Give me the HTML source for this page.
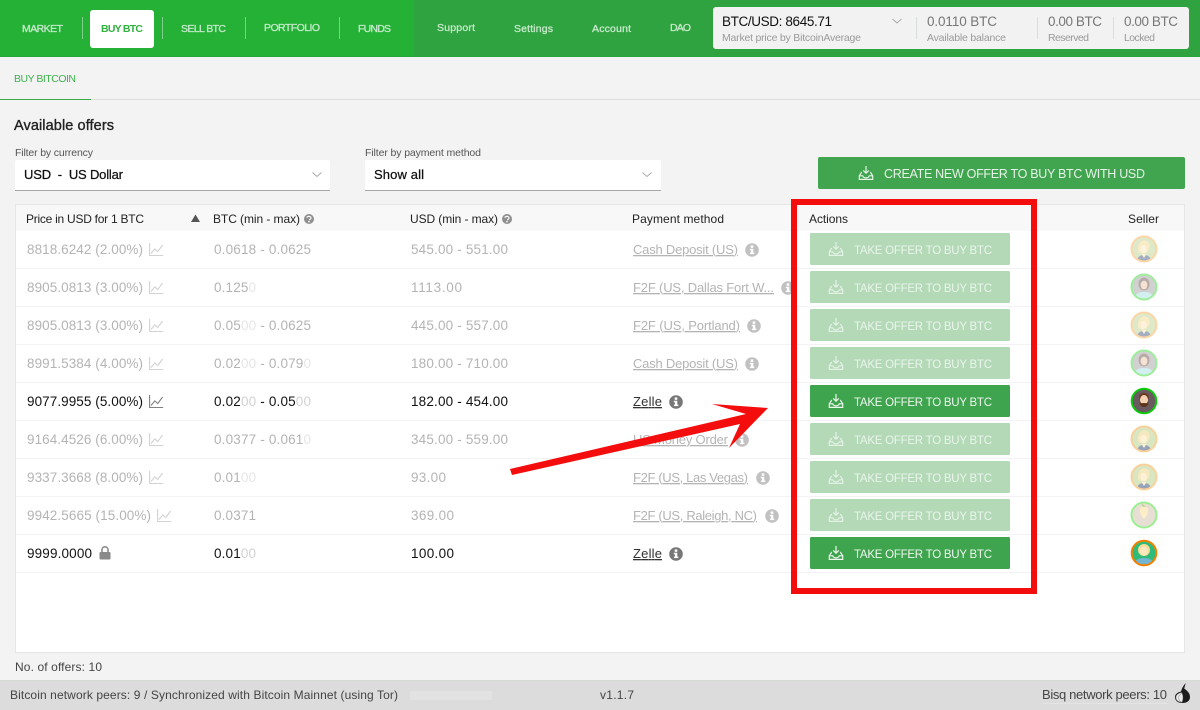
<!DOCTYPE html>
<html lang="en"><head><meta charset="utf-8"><title>Bisq - Buy BTC</title>
<style>
html,body{margin:0;padding:0;background:#f3f3f3;width:1200px;height:710px;overflow:hidden}
svg{display:block;font-family:"Liberation Sans",Arial,sans-serif}
.n{font-size:10.5px;fill:#c6e9cb;stroke:#c6e9cb;stroke-width:.3px}
.m{font-size:10.5px;fill:#9a9a9a}
.v{font-size:13.5px;fill:#777}
.h{font-size:12px;fill:#222}
.r{font-size:13.5px;fill:#b4b4b4}
.r tspan{fill:#e6e6e6}
.k{font-size:13.5px;fill:#111}
.k tspan{fill:#d2d2d2}
.p{font-size:13px;fill:#b4b4b4;text-decoration:underline}
.pk{font-size:13px;fill:#333;text-decoration:underline}
.b{font-size:11.5px;fill:#eaf5ec}
.bk{font-size:11.5px;fill:#eef8ef}
.f{font-size:12px;fill:#444}
</style></head><body>
<svg width="1200" height="710" viewBox="0 0 1200 710" xmlns="http://www.w3.org/2000/svg">
<defs>
<clipPath id="c"><circle r="12"/></clipPath>
<g id="dl" fill="none" stroke="currentColor" stroke-width="1.2"><path d="M7.500 0v7M4.700 4.400l2.800 2.800 2.800-2.800"/><path d="M3.200 6L.8 9.800v3.600h13.400V9.800L11.800 6"/><path d="M.8 9.800h3.400c.5 1.400 1.500 2 3.300 2s2.800-.6 3.300-2h3.400"/></g>
<g id="chart" fill="none" stroke="#808080" stroke-width="1.100"><path d="M.6 0v12.500h13.600"/><path d="M2 10.500l3.800-4.600 3 2.600L13.600 2"/></g>
<g id="info"><circle r="6.800" fill="#777"/><rect x="-1.300" y="-4.600" width="2.600" height="2.400" fill="#fff"/><path d="M-2.200-1.200h3.500v3.800h1v1.500h-4.400V2.600h1V.3h-1.100z" fill="#fff"/></g>
<g id="help"><circle r="5" fill="#8f8f8f"/><path d="M-2-1.200C-2-3 2-3.200 2-1c0 1.400-1.600 1.200-1.600 2.400" fill="none" stroke="#f8f8f8" stroke-width="1.200"/><rect x="-.8" y="2" width="1.500" height="1.400" fill="#f8f8f8"/></g>
<g id="avA"><g clip-path="url(#c)"><circle r="12" fill="#d3e2b8"/><path d="M-6 2C-7-8 0-10 3-8 7-6 6 0 3 3 1 5-5 5-6 2z" fill="#f6e6b4"/><ellipse cx="-.5" cy="0" rx="3.200" ry="4" fill="#fdf0d2"/><path d="M-7 13C-7 7-3 6 0 6s7 1 7 7z" fill="#8595ab"/><path d="M-2.500 5h5L0 9z" fill="#fbeed0"/></g><circle r="12.500" fill="none" stroke="#fbc98a" stroke-width="2"/></g>
<g id="avB"><g clip-path="url(#c)"><circle r="12" fill="#c2c2c2"/><ellipse cy="-3" rx="5.500" ry="6.500" fill="#a08e8a"/><ellipse cy="-2" rx="3.400" ry="4.400" fill="#f2d9c4"/><path d="M-10 13C-10 6-4 5 0 5s10 1 10 8z" fill="#c4eaee"/></g><circle r="12.500" fill="none" stroke="#7ee87a" stroke-width="2"/></g>
<g id="avC"><g clip-path="url(#c)"><circle r="12" fill="#e8dfd4"/><path d="M-3-12l5 4-2 2z" fill="#b8cf88"/><path d="M-4-6C-4-9 4-9 4-6 5-3 2 2 0 4-2 2-5-3-4-6z" fill="#fdeec8"/></g><circle r="12.500" fill="none" stroke="#9cef94" stroke-width="2"/></g>
<g id="avD"><g clip-path="url(#c)"><circle r="12" fill="#6a5a60"/><path d="M-5-3c0-7 10-7 10 0l-1 1c-3-2-5-2-8 0z" fill="#6b3d22"/><ellipse cy="-1" rx="4" ry="5" fill="#f3d3b4"/><path d="M-4 0c1 3 2 2 4 2s3 1 4-2c1 4-1 6-4 6s-5-2-4-6z" fill="#5c3418"/></g><circle r="12.300" fill="none" stroke="#0ccb0c" stroke-width="2"/></g>
<g id="avE"><g clip-path="url(#c)"><circle r="12" fill="#2fbb7a"/><circle cy="-3" r="6" fill="#f9dc98"/><ellipse cy="-2" rx="3.800" ry="4.600" fill="#fde8c0"/><path d="M-10 13C-10 6-4 5 0 5s10 1 10 8z" fill="#72b6d2"/></g><circle r="12.300" fill="none" stroke="#f58000" stroke-width="2"/></g>
</defs>

<rect width="1200" height="710" fill="#f3f3f3"/>
<rect width="414" height="56" fill="#25b136"/>
<rect x="414" width="786" height="56" fill="#2ea33f"/>
<rect y="56" width="1200" height="1" fill="#25a838"/>

<text class="n" x="22" y="32" textLength="41">MARKET</text>
<rect x="90" y="10" width="64" height="38" rx="3" fill="#fff"/>
<text x="101" y="32" font-size="10.500" font-weight="700" fill="#30b240" textLength="42">BUY BTC</text>
<text class="n" x="181" y="32" textLength="45">SELL BTC</text>
<text class="n" x="264" y="31" textLength="56">PORTFOLIO</text>
<text class="n" x="358" y="32" textLength="33">FUNDS</text>
<g fill="#7fd08a"><rect x="82" y="17" width="1" height="22"/><rect x="162" y="17" width="1" height="22"/><rect x="245" y="17" width="1" height="22"/><rect x="339" y="17" width="1" height="22"/></g>
<text class="n" x="437" y="31" textLength="38">Support</text>
<text class="n" x="514" y="32" textLength="39">Settings</text>
<text class="n" x="592" y="32" textLength="39">Account</text>
<text class="n" x="670" y="31" textLength="21">DAO</text>

<rect x="713" y="7" width="476" height="42" rx="3" fill="#f2f2f2"/>
<text x="722" y="26" font-size="13.500" fill="#111" textLength="110">BTC/USD: 8645.71</text>
<text class="m" x="722" y="41" textLength="139">Market price by BitcoinAverage</text>
<path d="M892.500 19l4.500 4 4.500-4" fill="none" stroke="#aaa" stroke-width="1"/>
<g fill="#d8dfd8"><rect x="916" y="17" width="1" height="22"/><rect x="1037" y="17" width="1" height="22"/><rect x="1113" y="17" width="1" height="22"/></g>
<text class="v" x="927" y="26" textLength="70">0.0110 BTC</text>
<text class="m" x="927" y="41" textLength="79">Available balance</text>
<text class="v" x="1048" y="26" textLength="54">0.00 BTC</text>
<text class="m" x="1048" y="41" textLength="41">Reserved</text>
<text class="v" x="1124" y="26" textLength="54">0.00 BTC</text>
<text class="m" x="1124" y="41" textLength="31">Locked</text>

<text x="14" y="82" font-size="10.500" fill="#3db24c" textLength="62">BUY BITCOIN</text>
<rect y="99" width="1200" height="1" fill="#dedede"/>
<rect y="99" width="91" height="1" fill="#3aab49"/>

<text x="14" y="130" font-size="14.500" fill="#222" stroke="#222" stroke-width=".35" textLength="100">Available offers</text>
<text x="15" y="156" font-size="10.500" fill="#555" textLength="78">Filter by currency</text>
<text x="365" y="156" font-size="10.500" fill="#555" textLength="116">Filter by payment method</text>

<rect x="15" y="160" width="315" height="30" rx="2" fill="#fff"/><rect x="15" y="190" width="315" height="1" fill="#a8a8a8"/>
<text x="24" y="179" font-size="13" fill="#111" stroke="#111" stroke-width=".25" textLength="99" xml:space="preserve">USD  -  US Dollar</text>
<path d="M312.500 172.500l4.500 4 4.500-4" fill="none" stroke="#aaa"/>
<rect x="365" y="160" width="296" height="30" rx="2" fill="#fff"/><rect x="365" y="190" width="296" height="1" fill="#a8a8a8"/>
<text x="374" y="179" font-size="13" fill="#111" stroke="#111" stroke-width=".25" textLength="50">Show all</text>
<path d="M642.500 172.500l4.500 4 4.500-4" fill="none" stroke="#aaa"/>

<rect x="818" y="157" width="367" height="32" rx="2" fill="#41a44f"/>
<use href="#dl" x="858.500" y="166" color="#e6f4e8"/>
<text x="884" y="178" font-size="12.500" fill="#e6f4e8" textLength="261">CREATE NEW OFFER TO BUY BTC WITH USD</text>

<rect x="15.500" y="204.500" width="1169" height="448" fill="#fff" stroke="#e6e6e6"/>
<rect x="16" y="205" width="1168" height="26" fill="#f8f8f8"/>
<text class="h" x="26" y="223" textLength="118">Price in USD for 1 BTC</text>
<path d="M191 222l4.500-7.500 4.500 7.500z" fill="#555"/>
<text class="h" x="213" y="223" textLength="87">BTC (min - max)</text><use href="#help" x="309" y="219"/>
<text class="h" x="410" y="223" textLength="88">USD (min - max)</text><use href="#help" x="507" y="219"/>
<text class="h" x="632" y="223" textLength="92">Payment method</text>
<text class="h" x="809" y="223" textLength="39">Actions</text>
<text class="h" x="1128" y="223" textLength="31">Seller</text>

<g fill="#f3f3f3"><rect x="16" y="268" width="1168" height="1"/><rect x="16" y="306" width="1168" height="1"/><rect x="16" y="344" width="1168" height="1"/><rect x="16" y="382" width="1168" height="1"/><rect x="16" y="420" width="1168" height="1"/><rect x="16" y="458" width="1168" height="1"/><rect x="16" y="496" width="1168" height="1"/><rect x="16" y="534" width="1168" height="1"/><rect x="16" y="572" width="1168" height="1"/></g>

<!-- row 1 -->
<text class="r" x="27" y="254" textLength="116">8818.6242 (2.00%)</text><use href="#chart" x="149" y="243" opacity=".35"/>
<text class="r" x="214" y="254" textLength="97">0.0618 - 0.0625</text>
<text class="r" x="411" y="254" textLength="97">545.00 - 551.00</text>
<text class="p" x="633" y="254" textLength="105">Cash Deposit (US)</text><use href="#info" x="752" y="250" opacity=".45"/>
<!-- row 2 -->
<text class="r" x="27" y="292" textLength="116">8905.0813 (3.00%)</text><use href="#chart" x="149" y="281" opacity=".35"/>
<text class="r" x="214" y="292" textLength="42">0.125<tspan>0</tspan></text>
<text class="r" x="411" y="292" textLength="51">1113.00</text>
<text class="p" x="633" y="292" textLength="141">F2F (US, Dallas Fort W...</text><use href="#info" x="788" y="288" opacity=".45"/>
<!-- row 3 -->
<text class="r" x="27" y="330" textLength="116">8905.0813 (3.00%)</text><use href="#chart" x="149" y="319" opacity=".35"/>
<text class="r" x="214" y="330" textLength="97">0.05<tspan>00</tspan> - 0.0625</text>
<text class="r" x="411" y="330" textLength="97">445.00 - 557.00</text>
<text class="p" x="633" y="330" textLength="107">F2F (US, Portland)</text><use href="#info" x="754" y="326" opacity=".45"/>
<!-- row 4 -->
<text class="r" x="27" y="368" textLength="116">8991.5384 (4.00%)</text><use href="#chart" x="149" y="357" opacity=".35"/>
<text class="r" x="214" y="368" textLength="97">0.02<tspan>00</tspan> - 0.079<tspan>0</tspan></text>
<text class="r" x="411" y="368" textLength="97">180.00 - 710.00</text>
<text class="p" x="633" y="368" textLength="105">Cash Deposit (US)</text><use href="#info" x="752" y="364" opacity=".45"/>
<!-- row 5 -->
<text class="k" x="27" y="406" textLength="116">9077.9955 (5.00%)</text><use href="#chart" x="149" y="395"/>
<text class="k" x="214" y="406" textLength="97">0.02<tspan>00</tspan> - 0.05<tspan>00</tspan></text>
<text class="k" x="411" y="406" textLength="97">182.00 - 454.00</text>
<text class="pk" x="633" y="406" textLength="29">Zelle</text><use href="#info" x="676" y="402"/>
<!-- row 6 -->
<text class="r" x="27" y="444" textLength="116">9164.4526 (6.00%)</text><use href="#chart" x="149" y="433" opacity=".35"/>
<text class="r" x="214" y="444" textLength="97">0.0377 - 0.061<tspan>0</tspan></text>
<text class="r" x="411" y="444" textLength="97">345.00 - 559.00</text>
<text class="p" x="633" y="444" textLength="95">US Money Order</text><use href="#info" x="742" y="440" opacity=".45"/>
<!-- row 7 -->
<text class="r" x="27" y="482" textLength="116">9337.3668 (8.00%)</text><use href="#chart" x="149" y="471" opacity=".35"/>
<text class="r" x="214" y="482" textLength="42">0.01<tspan>00</tspan></text>
<text class="r" x="411" y="482" textLength="35">93.00</text>
<text class="p" x="633" y="482" textLength="115">F2F (US, Las Vegas)</text><use href="#info" x="763" y="478" opacity=".45"/>
<!-- row 8 -->
<text class="r" x="27" y="520" textLength="124">9942.5665 (15.00%)</text><use href="#chart" x="157" y="509" opacity=".35"/>
<text class="r" x="214" y="520" textLength="42">0.0371</text>
<text class="r" x="411" y="520" textLength="43">369.00</text>
<text class="p" x="633" y="520" textLength="124">F2F (US, Raleigh, NC)</text><use href="#info" x="772" y="516" opacity=".45"/>
<!-- row 9 -->
<text class="k" x="27" y="558" textLength="65">9999.0000</text>
<rect x="99.500" y="552" width="11" height="7.500" rx="1" fill="#8a8a8a"/>
<path d="M102 552.500v-2.800c0-3.800 6-3.800 6 0v2.800" fill="none" stroke="#8a8a8a" stroke-width="1.600"/>
<text class="k" x="214" y="558" textLength="42">0.01<tspan>00</tspan></text>
<text class="k" x="411" y="558" textLength="43">100.00</text>
<text class="pk" x="633" y="558" textLength="29">Zelle</text><use href="#info" x="676" y="554"/>

<!-- action buttons -->
<g fill="#b3d9b7"><rect x="810" y="233" width="200" height="32" rx="1.500"/><rect x="810" y="271" width="200" height="32" rx="1.500"/><rect x="810" y="309" width="200" height="32" rx="1.500"/><rect x="810" y="347" width="200" height="32" rx="1.500"/><rect x="810" y="423" width="200" height="32" rx="1.500"/><rect x="810" y="461" width="200" height="32" rx="1.500"/><rect x="810" y="499" width="200" height="32" rx="1.500"/></g>
<g fill="#3fa44e"><rect x="810" y="385" width="200" height="32" rx="1.500"/><rect x="810" y="537" width="200" height="32" rx="1.500"/></g>
<g color="#e4f2e6"><use href="#dl" x="828.500" y="242"/><use href="#dl" x="828.500" y="280"/><use href="#dl" x="828.500" y="318"/><use href="#dl" x="828.500" y="356"/><use href="#dl" x="828.500" y="432"/><use href="#dl" x="828.500" y="470"/><use href="#dl" x="828.500" y="508"/></g>
<g color="#eef8ef"><use href="#dl" x="828.500" y="394"/><use href="#dl" x="828.500" y="546"/></g>
<text class="b" x="854" y="254" textLength="138">TAKE OFFER TO BUY BTC</text>
<text class="b" x="854" y="292" textLength="138">TAKE OFFER TO BUY BTC</text>
<text class="b" x="854" y="330" textLength="138">TAKE OFFER TO BUY BTC</text>
<text class="b" x="854" y="368" textLength="138">TAKE OFFER TO BUY BTC</text>
<text class="bk" x="854" y="406" textLength="138">TAKE OFFER TO BUY BTC</text>
<text class="b" x="854" y="444" textLength="138">TAKE OFFER TO BUY BTC</text>
<text class="b" x="854" y="482" textLength="138">TAKE OFFER TO BUY BTC</text>
<text class="b" x="854" y="520" textLength="138">TAKE OFFER TO BUY BTC</text>
<text class="bk" x="854" y="558" textLength="138">TAKE OFFER TO BUY BTC</text>

<!-- avatars -->
<use href="#avA" x="1144" y="249" opacity=".75"/>
<use href="#avB" x="1144" y="287" opacity=".75"/>
<use href="#avA" x="1144" y="325" opacity=".75"/>
<use href="#avB" x="1144" y="363" opacity=".75"/>
<use href="#avD" x="1144" y="401"/>
<use href="#avA" x="1144" y="439" opacity=".85"/>
<use href="#avA" x="1144" y="477" opacity=".85"/>
<use href="#avC" x="1144" y="515"/>
<use href="#avE" x="1144" y="553"/>

<!-- annotation -->
<rect x="794" y="202" width="240" height="389" fill="none" stroke="#f40d0d" stroke-width="6"/>
<polygon points="768,408 712,404 746,414 510,469 512,475 740,424 729,448" fill="#f40d0d"/>

<text class="f" x="15" y="671" textLength="87">No. of offers: 10</text>
<rect y="680" width="1200" height="30" fill="#dcdcdc"/>
<rect y="680" width="1200" height="1" fill="#d5dcd6"/>
<text class="f" x="10" y="699" textLength="388">Bitcoin network peers: 9 / Synchronized with Bitcoin Mainnet (using Tor)</text>
<rect x="410" y="691" width="82" height="9" fill="#e2e2e2"/>
<text class="f" x="600" y="699" textLength="34">v1.1.7</text>
<text x="1042" y="699" font-size="13" fill="#444" textLength="125">Bisq network peers: 10</text>
<rect x="1042" y="703" width="125" height="1" fill="#e4e4e4"/>
<path d="M1181 691.500c.8-3 2.200-6 4.800-8.500l-1.600 5.500c3.800 2.600 5.800 5.200 5.800 8.500 0 3.800-3 6-7.500 6-4.800 0-7.500-2.300-7.500-6 0-2.800 2.800-4.800 6-5.500z" fill="#1c1c1c"/>
<path d="M1181.500 692.500c-3 .8-5.500 2.200-5.500 5 0 2.800 2.200 4.500 6 4.600 1.300-3.200 1.200-6.800-.5-9.600z" fill="#ececec" stroke="#888" stroke-width=".5"/>
<path d="M1181.500 693.500c-1.600 1-2.800 2.300-2.800 4.200 0 1.800 1 3.300 2.800 4.200" fill="none" stroke="#999" stroke-width=".6"/>
</svg>
</body></html>
